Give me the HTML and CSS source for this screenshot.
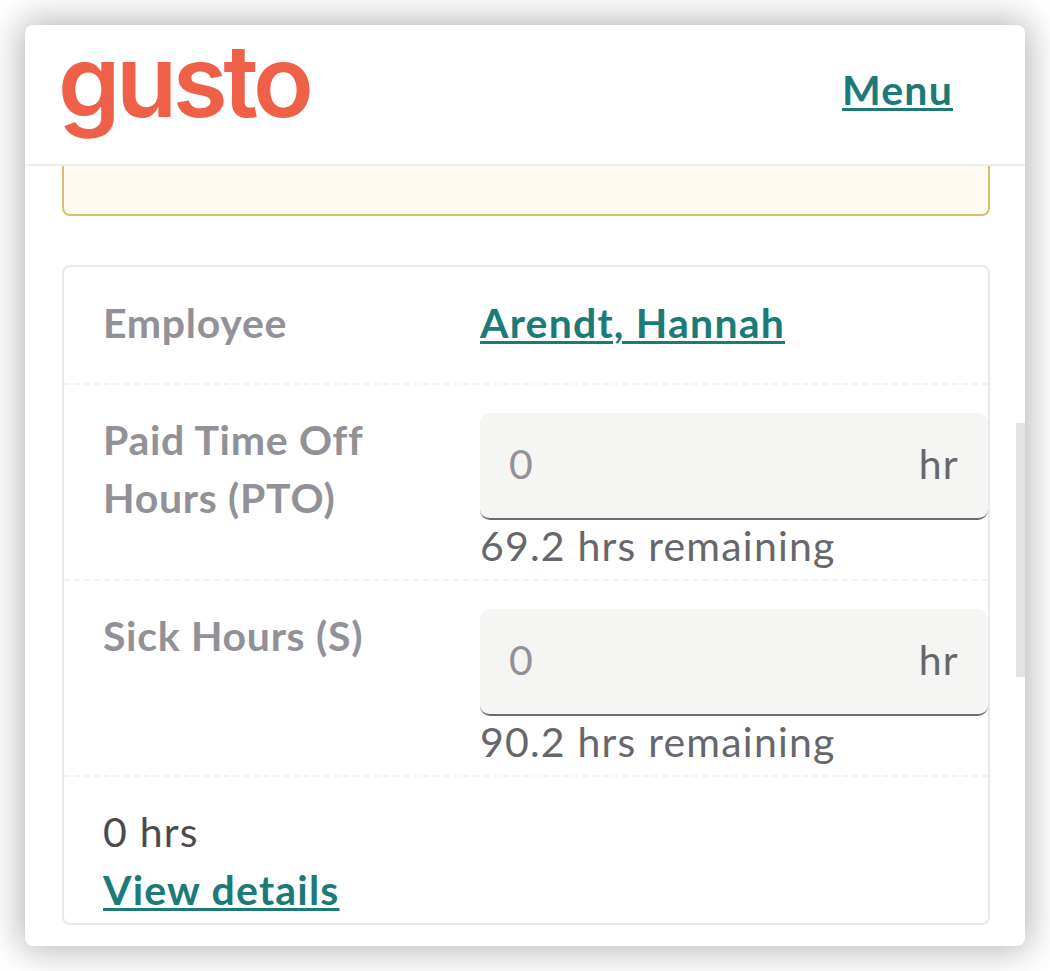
FILE: index.html
```html
<!DOCTYPE html>
<html lang="en">
<head>
    <meta charset="UTF-8">
    <meta name="viewport" content="width=device-width, initial-scale=1.0">
    <title>Gusto Time Off</title>
    <link rel="stylesheet" href="styles.css">
</head>
<body>
    <div class="phone">
        <header class="top-bar">
            <span class="logo">gusto</span>
            <a class="link menu-link" href="#">Menu</a>
        </header>
        <div class="scroll-thumb"></div>
        <main class="content">
            <div class="notice"></div>
            <section class="details">
                <div class="row row-employee">
                    <div class="label">Employee</div>
                    <div><a class="link" href="#">Arendt, Hannah</a></div>
                </div>
                <div class="row row-hours">
                    <div class="label">Paid Time Off Hours (PTO)</div>
                    <div>
                        <div class="hours-input">
                            <span class="placeholder">0</span>
                            <span class="unit">hr</span>
                        </div>
                        <div class="remaining">69.2 hrs remaining</div>
                    </div>
                </div>
                <div class="row row-hours">
                    <div class="label">Sick Hours (S)</div>
                    <div>
                        <div class="hours-input">
                            <span class="placeholder">0</span>
                            <span class="unit">hr</span>
                        </div>
                        <div class="remaining">90.2 hrs remaining</div>
                    </div>
                </div>
                <div class="summary">
                    <div class="total">0 hrs</div>
                    <a class="link" href="#">View details</a>
                </div>
            </section>
        </main>
    </div>
</body>
</html>
```

FILE: styles.css
```css
* {
    box-sizing: border-box;
}
body {
    margin: 0;
    padding: 25px;
    background-color: #fff;
    font-family: Lato, "Open Sans", sans-serif;
    font-size: 41px;
    line-height: 58px;
    letter-spacing: 1.2px;
    color: #66676b;
}
.phone {
    position: relative;
    height: 921px;
    background-color: #fff;
    border-radius: 8px;
    box-shadow: 0 0 36px 4px rgba(0,0,0,0.3);
}
.top-bar {
    height: 141px;
    padding: 0 72px 0 33px;
    display: flex;
    align-items: center;
    justify-content: space-between;
    border-bottom: 2px solid #ececec;
}
.logo {
    font-family: Inter, Lato, sans-serif;
    font-size: 100px;
    font-weight: 600;
    line-height: 90px;
    letter-spacing: -4.5px;
    color: #ef6049;
    margin-bottom: 27px;
}
.link {
    color: #1c7a78;
    font-weight: 700;
    text-decoration: underline;
    text-decoration-thickness: 3px;
    text-underline-offset: 3px;
}
.menu-link {
    margin-top: -10px;
}
.scroll-thumb {
    position: absolute;
    top: 398px;
    right: 0;
    width: 9px;
    height: 254px;
    background-color: #e3e3e3;
}
.content {
    padding: 0 35px 0 37px;
}
.notice {
    height: 50px;
    background-color: #fefaf2;
    border: 2px solid #d9bf6b;
    border-top: none;
    border-radius: 0 0 8px 8px;
}
.details {
    margin-top: 49px;
    height: 660px;
    border: 2px solid #e9e9e9;
    border-radius: 8px;
}
.row {
    display: grid;
    grid-template-columns: 377px 1fr;
    padding-left: 39px;
    border-bottom: 2px dashed #f3f3f3;
}
.row-employee {
    height: 118px;
    padding-top: 27px;
}
.row-hours {
    height: 196px;
    padding-top: 28px;
}
.row-hours .label {
    margin-top: -2px;
    padding-right: 60px;
}
.label {
    color: #919197;
    font-weight: 700;
    letter-spacing: 0.7px;
}
.hours-input {
    height: 107px;
    width: 508px;
    padding: 0 29px 4px 29px;
    display: flex;
    align-items: center;
    justify-content: space-between;
    background-color: #f5f5f4;
    border-bottom: 2px solid #6c6c70;
    border-radius: 10px;
}
.placeholder {
    color: #919197;
}
.remaining {
    margin-top: -3px;
}
.summary {
    padding: 26px 0 0 39px;
}
.total {
    color: #4a4b4f;
}
```
